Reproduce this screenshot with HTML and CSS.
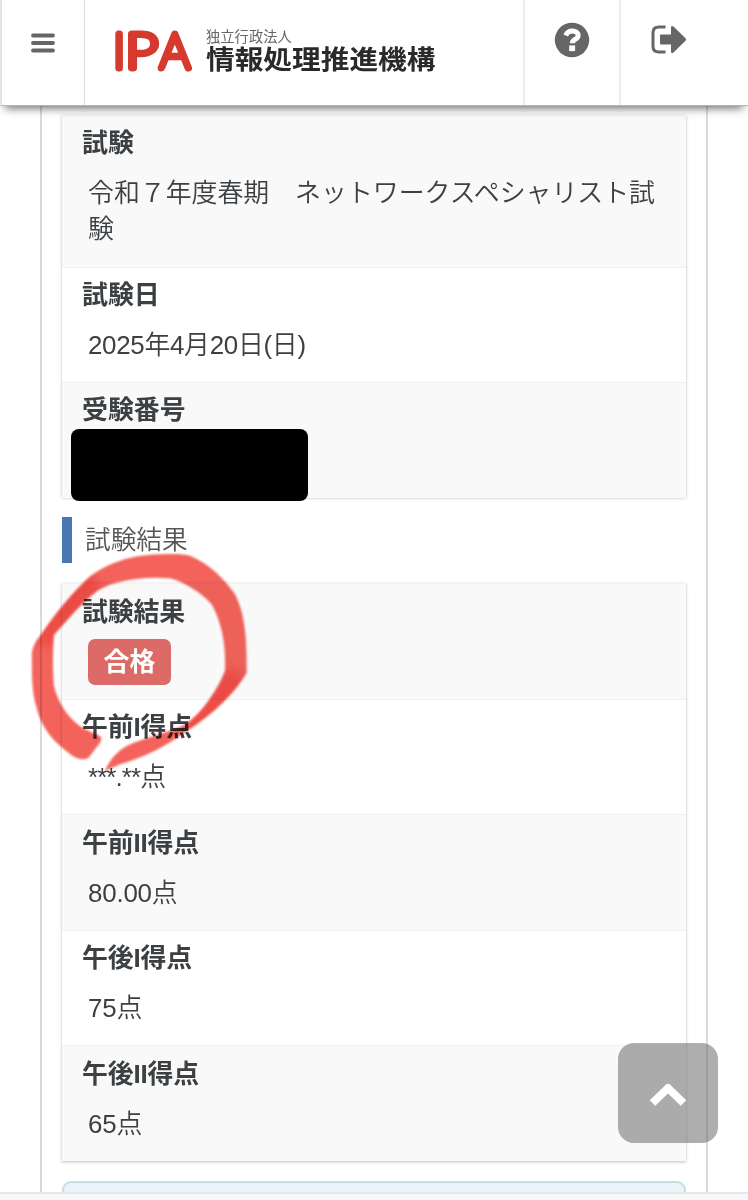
FILE: index.html
```html
<!DOCTYPE html>
<html lang="ja">
<head>
<meta charset="utf-8">
<title>試験結果</title>
<link rel="stylesheet" href="styles.css">
</head>
<body>
<div class="screen">
  <header class="header">
    <button class="header-menu" aria-label="メニュー">
      <svg width="24" height="20" viewBox="0 0 24 20"><path d="M2 2.500h20M2 10h20M2 17.500h20"/></svg>
    </button>
    <div class="brand">
      <svg class="brand-mark" width="84" height="70" viewBox="0 -9 84 70">
        <text transform="translate(-.7 43) scale(1 1)">I</text>
        <text transform="translate(11.500 43) scale(1.200 1)">P</text>
        <text transform="translate(46 43) scale(.97 1)">A</text>
      </svg>
      <div class="brand-name"><span class="brand-sub">独立行政法人</span><span class="brand-main">情報処理推進機構</span></div>
    </div>
    <button class="header-btn help" aria-label="ヘルプ">
      <svg width="36" height="36" viewBox="0 0 36 36"><circle cx="18" cy="18" r="17.2" fill="#666"/><path d="M11.700 13.500C13.200 10.200 15.300 9 18.400 9c3.400 0 5.700 1.900 5.700 4.400 0 4.300-5.800 3.800-5.800 7.900" fill="none" stroke="#fff" stroke-width="5"/><path d="M15.200 23.400h5.900v5.700h-5.900z" fill="#fff"/></svg>
    </button>
    <button class="header-btn logout" aria-label="ログアウト">
      <svg width="36" height="32" viewBox="0 0 36 32"><path d="M14.500 3H8Q2 3 2 8.500V22.500Q2 28 8 28H14.500" fill="none" stroke="#666" stroke-width="3"/><path d="M10 10.500h10V3.500q0-2.500 2.500-1l12.200 12q1 1 0 2L22.500 28.500q-2.500 1.500-2.500-1v-7H10q-1 0-1-1v-8q0-1 1-1z" fill="#666"/></svg>
    </button>
  </header>

  <main class="main">
    <div class="frame">
      <dl class="card">
        <div class="row"><dt>試験</dt><dd>令和７年度春期　ネットワークスペシャリスト試験</dd></div>
        <div class="row"><dt>試験日</dt><dd class="date">2025年4月20日(日)</dd></div>
        <div class="row"><dt>受験番号</dt><dd class="hidden-number"><span class="redaction"></span></dd></div>
      </dl>
      <h2 class="section-title">試験結果</h2>
      <dl class="card results">
        <div class="row"><dt>試験結果</dt><dd class="badge-cell"><span class="badge">合格</span></dd></div>
        <div class="row"><dt>午前I得点</dt><dd class="masked">***.**点</dd></div>
        <div class="row"><dt>午前II得点</dt><dd class="score">80.00点</dd></div>
        <div class="row"><dt>午後I得点</dt><dd class="score">75点</dd></div>
        <div class="row"><dt>午後II得点</dt><dd class="score">65点</dd></div>
      </dl>
      <div class="notice"></div>
    </div>
  </main>
  <footer class="bottom-bar"></footer>

  <svg class="marker" width="240" height="260" viewBox="0 0 720 780">
    <defs>
      <clipPath id="ring"><path d="M190 655C160 655 135 625 110 605C85 580 60 545 50 500C37 460 35 410 35 340C38 315 48 300 60 285C100 225 140 175 190 125C240 75 320 42 420 40C460 38 490 38 510 44C570 70 610 110 645 160C675 220 681 290 680 395C650 450 580 520 500 570C450 605 400 640 300 670L255 690C265 665 285 635 320 615C370 590 450 575 500 548C550 510 590 450 615 390C618 320 608 250 575 190C535 145 480 120 450 112C380 106 290 115 235 148C190 180 140 240 102 282C98 330 98 390 102 435C115 490 150 540 195 565L240 585Q248 592 240 605L210 645Q202 655 190 655Z"/></clipPath>
    </defs>
    <g clip-path="url(#ring)">
      <path fill="#f2574e" d="M0 0h720v780H0z"/>
      <path class="marker-dense" d="M70 310C100 235 155 175 225 115M650 395C610 465 570 520 500 560"/>
    </g>
  </svg>
  <button class="to-top" aria-label="ページの先頭へ">
    <svg width="40" height="28" viewBox="0 0 40 28"><path d="M4.500 22L20 7L35.500 22"/></svg>
  </button>
</div>
</body>
</html>
```
FILE: styles.css
```css
* { box-sizing: border-box; }
body {
  margin: 0;
  background: #fff;
  color: #3c4043;
  font-family: "Liberation Sans", "Noto Sans CJK JP", sans-serif;
  font-size: 25.9px;
}
button { border: 0; padding: 0; background: none; display: block; }
svg { display: block; }
.screen {
  position: relative;
  display: flex;
  flex-direction: column;
  height: 1200px;
  overflow: hidden;
}
.header {
  display: flex;
  flex: 0 0 106px;
  z-index: 2;
  background: #fff;
  border-left: 2px solid #e2e3e8;
  border-bottom: 1px solid #b4b4b4;
  box-shadow: 0 7px 9px -5px rgba(0, 0, 0, .6);
}
.header-menu {
  width: 83px;
  padding: 33px 0 0 29px;
  border-right: 1px solid #d9dbe0;
  display: flex;
  align-items: flex-start;
}
.header-menu path { stroke: #666; stroke-width: 3.8; stroke-linecap: round; }
.brand {
  display: flex;
  flex: 1;
  padding: 16px 0 0 29px;
  gap: 8px;
}
.brand-mark { overflow: visible; }
.brand-mark text {
  font-family: Lato, sans-serif;
  font-weight: 100;
  font-size: 48px;
  fill: #d63a2f;
  stroke: #d63a2f;
  stroke-width: 7px;
  stroke-linejoin: round;
  stroke-linecap: round;
}
.brand-name {
  display: flex;
  flex-direction: column;
  padding-top: 9px;
  font-family: "Noto Sans CJK JP", sans-serif;
  white-space: nowrap;
}
.brand-sub { font-size: 14.3px; line-height: 18px; margin-top: 2px; color: #666; }
.brand-main {
  font-size: 28.7px;
  line-height: 28px;
  font-weight: 700;
  color: #2a2a2a;
  transform: scaleY(.93);
  transform-origin: 0 0;
}
.header-btn {
  width: 96px;
  border-left: 2px solid #eceeee;
  display: flex;
  justify-content: center;
  align-items: flex-start;
}
.help { padding-top: 22px; }
.logout { width: 129px; padding-top: 24px; padding-right: 32px; }
.main { flex: 1; min-height: 0; overflow: hidden; padding: 0 40px; }
.frame {
  height: 1200px;
  padding: 9px 20px 0;
  border: solid #dadada;
  border-width: 0 2px;
}
.card {
  margin: 0;
  color: #3c4043;
  box-shadow: 0 1px 3px rgba(0, 0, 0, .26);
}
.row {
  min-height: 115.5px;
  padding: 9px 20px 19.5px;
  border-top: 1px solid #f0f0f0;
  background: #fff;
}
.row:nth-child(odd) { background: #f9f9f9; }
.card .row:first-child { border-top-color: #f4f4f4; }
.card:first-child { height: 382px; }
dt { font-weight: 700; line-height: 36px; }
dd { margin: 14px 0 0 6px; line-height: 36px; font-weight: 350; }
.date { letter-spacing: -.3px; }
.masked { letter-spacing: -.9px; }
.score { letter-spacing: -.2px; }
.hidden-number { height: 36px; position: relative; }
.redaction {
  position: absolute;
  left: -17px;
  top: -13px;
  width: 237px;
  height: 72px;
  border-radius: 8px;
  background: #000;
}
.section-title {
  margin: 20px 0;
  padding-left: 13px;
  border-left: 10px solid #4776b0;
  font-size: 25.7px;
  line-height: 46px;
  font-weight: 350;
  color: #555;
}
.results .row { padding-top: 9.5px; padding-bottom: 19px; }
.results dt { letter-spacing: -.15px; }
.badge-cell { margin-top: 9px; margin-bottom: -5px; line-height: 46px; }
.badge {
  display: block;
  width: 83px;
  height: 46px;
  line-height: 46px;
  border-radius: 7px;
  background: #dc6b68;
  color: #fff;
  text-align: center;
  font-weight: 700;
}
.notice {
  height: 80px;
  margin-top: 20px;
  border: 2px solid #c5dfe5;
  border-radius: 9px;
  background: #eaf4f8;
}
.bottom-bar {
  flex: 0 0 8px;
  background: #f8f8fb;
  border-top: 2px solid #e6e7ea;
  z-index: 1;
}
.marker {
  position: absolute;
  left: 20px;
  top: 541px;
  mix-blend-mode: multiply;
  opacity: .93;
  filter: blur(.8px);
}
.marker-dense { fill: none; stroke: #ea2a24; stroke-width: 60; opacity: .55; filter: blur(14px); }
.to-top {
  position: absolute;
  left: 618px;
  top: 1042.5px;
  width: 100px;
  height: 100px;
  border-radius: 16px;
  background: rgba(100, 100, 100, .52);
  display: flex;
  align-items: center;
  justify-content: center;
  padding-top: 5px;
}
.to-top path { fill: none; stroke: #fff; stroke-width: 8; stroke-linejoin: round; }
```
